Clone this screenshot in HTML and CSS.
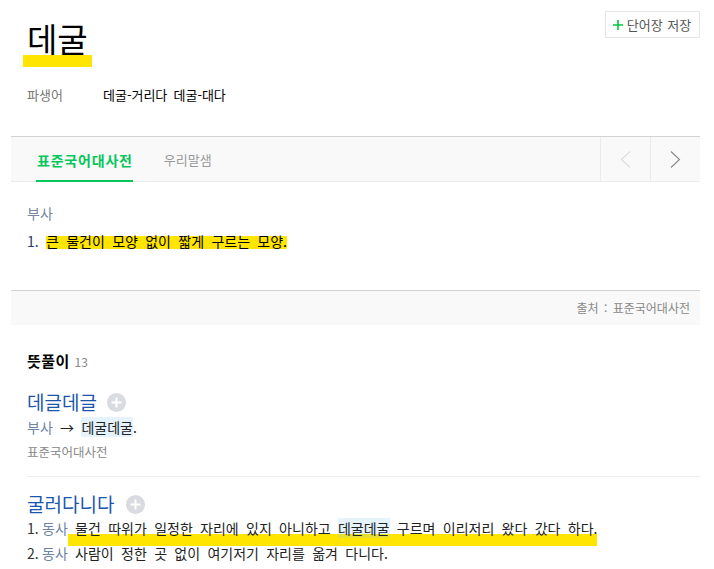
FILE: index.html
```html
<!DOCTYPE html>
<html lang="ko">
<head>
<meta charset="utf-8">
<title>데굴</title>
<link rel="stylesheet" href="styles.css">
</head>
<body>
<div class="page">
  <header class="entry-head">
    <div class="head-main">
      <h1 class="word"><span class="word-mark">데굴</span></h1>
      <dl class="derive">
        <dt>파생어</dt>
        <dd>데굴-거리다 데굴-대다</dd>
      </dl>
    </div>
    <button class="save-btn" type="button">
      <svg class="save-plus" width="10" height="10" viewBox="0 0 10 10"><path d="M5 0V10M0 5H10" stroke="#00c73c" stroke-width="1.6" fill="none"/></svg>
      <span>단어장 저장</span>
    </button>
  </header>

  <section class="dict">
    <nav class="tabs">
      <div class="tab-list">
        <a class="tab tab-active">표준국어대사전</a>
        <a class="tab">우리말샘</a>
      </div>
      <div class="pager">
        <button class="pg" type="button" aria-label="이전">
          <svg width="11" height="17" viewBox="0 0 11 17"><path d="M10 0.5L1.5 8.5L10 16.5" stroke="#dcdcdc" stroke-width="1.1" fill="none"/></svg>
        </button>
        <button class="pg" type="button" aria-label="다음">
          <svg width="11" height="17" viewBox="0 0 11 17"><path d="M1 0.5L9.5 8.5L1 16.5" stroke="#888" stroke-width="1.1" fill="none"/></svg>
        </button>
      </div>
    </nav>
    <div class="def">
      <p class="def-pos">부사</p>
      <p class="def-sense"><span class="def-num">1.</span><mark class="def-hl">큰 물건이 모양 없이 짧게 구르는 모양.</mark></p>
    </div>
    <div class="source">출처 : 표준국어대사전</div>
  </section>

  <section class="meanings">
    <h2 class="meanings-title">뜻풀이 <span class="count">13</span></h2>

    <div class="item">
      <div class="item-head">
        <a class="item-word">데글데글</a>
        <span class="add-btn"><svg width="19" height="19" viewBox="0 0 19 19"><circle cx="9.5" cy="9.5" r="9.5" fill="#d8dbdf"/><path d="M9.5 4.5V14.5M4.5 9.5H14.5" stroke="#fff" stroke-width="2" fill="none"/></svg></span>
      </div>
      <p class="item-line"><span class="pos">부사</span> <span class="arrow">→</span> <span class="ref">데굴데굴</span>.</p>
      <p class="item-src">표준국어대사전</p>
    </div>

    <div class="item">
      <div class="item-head">
        <a class="item-word">굴러다니다</a>
        <span class="add-btn add-btn-wide"><svg width="19" height="19" viewBox="0 0 19 19"><circle cx="9.5" cy="9.5" r="9.5" fill="#d8dbdf"/><path d="M9.5 4.5V14.5M4.5 9.5H14.5" stroke="#fff" stroke-width="2" fill="none"/></svg></span>
      </div>
      <p class="item-line sense-first"><span class="num">1.</span><span class="pos">동사</span><span class="under"> 물건 따위가 일정한 자리에 있지 아니하고 <span class="ref">데굴데굴</span> 구르며 이리저리 왔다 갔다 하다.</span></p>
      <p class="item-line sense-next"><span class="num">2.</span><span class="pos">동사</span> 사람이 정한 곳 없이 여기저기 자리를 옮겨 다니다.</p>
    </div>
  </section>
</div>
</body>
</html>
```

FILE: styles.css
```css
* { box-sizing: border-box; }

html, body {
  margin: 0;
  padding: 0;
  background: #fff;
}

body {
  font-family: "Noto Sans CJK KR", "Noto Sans", sans-serif;
  font-size: 14px;
  line-height: 20px;
  color: #000;
  word-spacing: 3.4px;
}

p, h1, h2, dl, dt, dd { margin: 0; }

.page {
  margin: 0 14px 0 11px;
  overflow: hidden;
}

/* header */
.entry-head {
  display: flex;
  justify-content: space-between;
  align-items: flex-start;
  padding: 11px 0 0 16px;
}

.head-main {
  padding-top: 7px;
}

.word {
  font-size: 33px;
  line-height: 40px;
  font-weight: 400;
  margin-left: -4px;
}

.word-mark {
  padding: 0 4px 5px;
  background: linear-gradient(to bottom, transparent 41px, #ffe500 41px);
}

.derive {
  display: flex;
  margin-top: 27px;
  font-size: 13px;
  word-spacing: 2.5px;
}

.derive dt {
  width: 76px;
  color: #777;
}

.derive dd {
  color: #000;
}

.save-btn {
  display: flex;
  align-items: center;
  justify-content: center;
  gap: 4px;
  width: 95px;
  height: 27px;
  padding: 0 1px 0 0;
  border: 1px solid #e6e6e6;
  background: #fff;
  font-family: inherit;
  font-size: 13px;
  color: #555;
  word-spacing: 1px;
  cursor: pointer;
}

.save-plus { display: block; }

/* dictionary block */
.dict {
  margin-top: 31px;
  border-top: 1px solid #d3d3d3;
}

.tabs {
  display: flex;
  justify-content: space-between;
  height: 45px;
  background: #f9f9f9;
  border-bottom: 1px solid #ebebeb;
}

.tab-list {
  display: flex;
  gap: 31px;
  padding-left: 25px;
}

.tab {
  display: flex;
  align-items: center;
  height: 45px;
  margin-bottom: -1px;
  font-size: 13px;
  color: #999;
  border-bottom: 2px solid transparent;
  padding-top: 2px;
}

.tab-active {
  font-size: 14px;
  font-weight: 700;
  letter-spacing: 0.8px;
  color: #03c75a;
  border-bottom-color: #03c75a;
  padding-left: 1px;
}

.pager {
  display: flex;
}

.pg {
  width: 50px;
  height: 44px;
  display: flex;
  align-items: center;
  justify-content: center;
  border: 0;
  border-left: 1px solid #ebebeb;
  background: transparent;
  padding: 0;
}

.pg svg { display: block; }

.def {
  padding: 21px 16px 39px;
}

.def-pos {
  color: #7686a0;
}

.def-sense {
  margin-top: 8px;
}

.def-num {
  display: inline-block;
  width: 19px;
  color: #1d3d6e;
}

.def-hl {
  color: #000;
  background: linear-gradient(to bottom, transparent 5px, #ffe500 5px, #ffe500 18px, transparent 18px);
}

.source {
  height: 35px;
  line-height: 34px;
  border-top: 1px solid #d3d3d3;
  background: #f9f9f9;
  text-align: right;
  padding-right: 10px;
  font-size: 12px;
  color: #888;
  word-spacing: 2px;
}

/* meanings */
.meanings {
  padding: 26px 0 0 16px;
}

.meanings-title {
  font-size: 15px;
  line-height: 20px;
  font-weight: 700;
  letter-spacing: 0.5px;
  color: #000;
  word-spacing: 0;
}

.count {
  font-size: 12px;
  font-weight: 400;
  letter-spacing: 0;
  color: #888;
}

.item {
  padding: 18px 0 15px;
  border-bottom: 1px solid #eeeeee;
}

.item + .item {
  padding-top: 15px;
  border-bottom: 0;
}

.item-head {
  display: flex;
  align-items: center;
  height: 24px;
}

.item-word {
  font-size: 19px;
  line-height: 24px;
  color: #1c55ad;
}

.add-btn {
  display: block;
  margin-left: 10px;
}

.add-btn-wide {
  margin-left: 12px;
}

.add-btn svg { display: block; }

.item-line {
  color: #222;
  margin-top: 3px;
}

.sense-first { margin-top: 2px; }
.sense-next { margin-top: 5px; }

.pos {
  color: #6e84a6;
}

.arrow {
  color: #222;
}

.num {
  display: inline-block;
  width: 15px;
  color: #333;
}

.ref {
  background: rgba(130, 200, 240, 0.22);
}

.under {
  padding-bottom: 8px;
  background: linear-gradient(to bottom, transparent 16px, #ffe500 16px);
}

.item-src {
  margin-top: 6px;
  font-size: 12.5px;
  line-height: 18px;
  color: #888;
  word-spacing: 0;
}
```
